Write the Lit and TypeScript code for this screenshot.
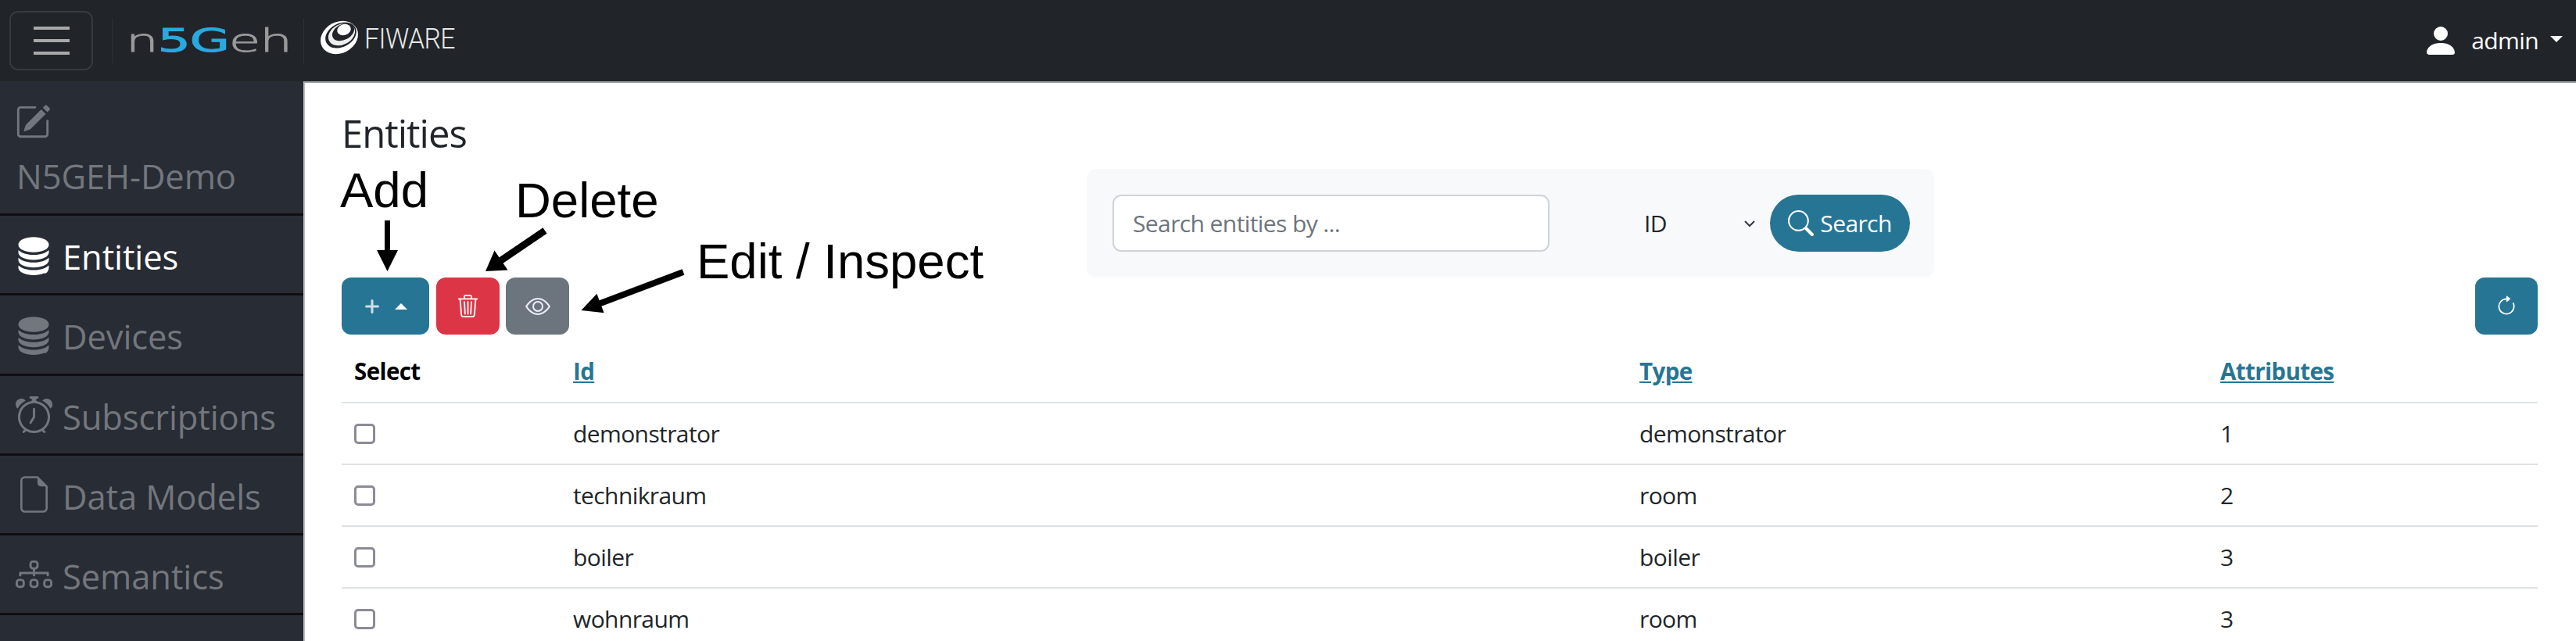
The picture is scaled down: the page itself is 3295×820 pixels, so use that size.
import { LitElement, html, css, svg } from "lit";
import { customElement } from "lit/decorators.js";

const ic = (size: number, body: unknown, cls = "") =>
  html`<svg class=${cls} width=${size} height=${size} viewBox="0 0 16 16" fill="currentColor">${body}</svg>`;

const pencil = svg`<path d="M15.502 1.94a.5.5 0 0 1 0 .706L14.459 3.69l-2-2L13.502.646a.5.5 0 0 1 .707 0l1.293 1.293zm-1.75 2.456-2-2L4.939 9.21a.5.5 0 0 0-.121.196l-.805 2.414a.25.25 0 0 0 .316.316l2.414-.805a.5.5 0 0 0 .196-.12l6.813-6.814z"/><path fill-rule="evenodd" d="M1 13.5A1.5 1.5 0 0 0 2.5 15h11a1.5 1.5 0 0 0 1.5-1.5v-6a.5.5 0 0 0-1 0v6a.5.5 0 0 1-.5.5h-11a.5.5 0 0 1-.5-.5v-11a.5.5 0 0 1 .5-.5H9a.5.5 0 0 0 0-1H2.5A1.5 1.5 0 0 0 1 2.5v11z"/>`;
const db = svg`<path d="M3.904 1.777C4.978 1.289 6.427 1 8 1s3.022.289 4.096.777C13.125 2.245 14 2.993 14 4s-.875 1.755-1.904 2.223C11.022 6.711 9.573 7 8 7s-3.022-.289-4.096-.777C2.875 5.755 2 5.007 2 4s.875-1.755 1.904-2.223Z"/><path d="M2 6.161V7c0 1.007.875 1.755 1.904 2.223C4.978 9.71 6.427 10 8 10s3.022-.289 4.096-.777C13.125 8.755 14 8.007 14 7v-.839c-.457.432-1.004.751-1.49.972C11.278 7.693 9.682 8 8 8s-3.278-.307-4.51-.867c-.486-.22-1.033-.54-1.49-.972Z"/><path d="M2 9.161V10c0 1.007.875 1.755 1.904 2.223C4.978 12.711 6.427 13 8 13s3.022-.289 4.096-.777C13.125 11.755 14 11.007 14 10v-.839c-.457.432-1.004.751-1.49.972-1.232.56-2.828.867-4.51.867s-3.278-.307-4.51-.867c-.486-.22-1.033-.54-1.49-.972Z"/><path d="M2 12.161V13c0 1.007.875 1.755 1.904 2.223C4.978 15.711 6.427 16 8 16s3.022-.289 4.096-.777C13.125 15.755 14 14.007 14 13v-.839c-.457.432-1.004.751-1.49.972-1.232.56-2.828.867-4.51.867s-3.278-.307-4.51-.867c-.486-.22-1.033-.54-1.49-.972Z"/>`;
const alarm = svg`<path d="M8.5 5.5a.5.5 0 0 0-1 0v3.362l-1.429 2.38a.5.5 0 1 0 .858.515l1.5-2.5A.5.5 0 0 0 8.5 9V5.5z"/><path d="M6.5 0a.5.5 0 0 0 0 1H7v1.07a7.001 7.001 0 0 0-3.273 12.474l-.602.602a.5.5 0 0 0 .707.708l.746-.746A6.97 6.97 0 0 0 8 16a6.97 6.97 0 0 0 3.422-.892l.746.746a.5.5 0 0 0 .707-.708l-.601-.602A7.001 7.001 0 0 0 9 2.07V1h.5a.5.5 0 0 0 0-1h-3zm1.038 3.018a6.093 6.093 0 0 1 .924 0 6 6 0 1 1-.924 0zM0 3.5c0 .753.333 1.429.86 1.887A8.035 8.035 0 0 1 4.387 1.86 2.5 2.5 0 0 0 0 3.5zM13.5 1c-.753 0-1.429.333-1.887.86a8.035 8.035 0 0 1 3.527 3.527A2.5 2.5 0 0 0 13.5 1z"/>`;
const file = svg`<path fill="none" stroke="currentColor" stroke-width=".9" d="M4 .5h5.500L13.500 4.500V14a1.500 1.500 0 0 1-1.500 1.500H4A1.500 1.500 0 0 1 2.500 14V2A1.500 1.500 0 0 1 4 .5z"/><path d="M9.500 .5v2.500a1.500 1.500 0 0 0 1.500 1.500h2.500z"/>`;
const diagram = svg`<path fill-rule="evenodd" d="M6 3.5A1.5 1.5 0 0 1 7.5 2h1A1.5 1.5 0 0 1 10 3.5v1A1.5 1.5 0 0 1 8.5 6v1H14a.5.5 0 0 1 .5.5v1a.5.5 0 0 1-1 0V8h-5v.5a.5.5 0 0 1-1 0V8h-5v.5a.5.5 0 0 1-1 0v-1A.5.5 0 0 1 2 7h5.5V6A1.5 1.5 0 0 1 6 4.5v-1zM8.5 5a.5.5 0 0 0 .5-.5v-1a.5.5 0 0 0-.5-.5h-1a.5.5 0 0 0-.5.5v1a.5.5 0 0 0 .5.5h1zM0 11.5A1.5 1.5 0 0 1 1.5 10h1A1.5 1.5 0 0 1 4 11.5v1A1.5 1.5 0 0 1 2.5 14h-1A1.5 1.5 0 0 1 0 12.5v-1zm1.5-.5a.5.5 0 0 0-.5.5v1a.5.5 0 0 0 .5.5h1a.5.5 0 0 0 .5-.5v-1a.5.5 0 0 0-.5-.5h-1zm4.5.5A1.5 1.5 0 0 1 7.5 10h1a1.5 1.5 0 0 1 1.5 1.5v1A1.5 1.5 0 0 1 8.5 14h-1A1.5 1.5 0 0 1 6 12.5v-1zm1.5-.5a.5.5 0 0 0-.5.5v1a.5.5 0 0 0 .5.5h1a.5.5 0 0 0 .5-.5v-1a.5.5 0 0 0-.5-.5h-1zM12 11.5a1.5 1.5 0 0 1 1.5-1.5h1a1.5 1.5 0 0 1 1.5 1.5v1a1.5 1.5 0 0 1-1.5 1.5h-1a1.5 1.5 0 0 1-1.5-1.5v-1zm1.5-.5a.5.5 0 0 0-.5.5v1a.5.5 0 0 0 .5.5h1a.5.5 0 0 0 .5-.5v-1a.5.5 0 0 0-.5-.5h-1z"/>`;
const trash = svg`<path d="M6.5 1h3a.5.5 0 0 1 .5.5v1H6v-1a.5.5 0 0 1 .5-.5ZM11 2.5v-1A1.5 1.5 0 0 0 9.5 0h-3A1.5 1.5 0 0 0 5 1.5v1H2.506a.58.58 0 0 0-.01 0H1.5a.5.5 0 0 0 0 1h.538l.853 10.66A2 2 0 0 0 4.885 16h6.23a2 2 0 0 0 1.994-1.84l.853-10.66h.538a.5.5 0 0 0 0-1h-.995a.59.59 0 0 0-.01 0H11Zm1.958 1-.846 10.58a1 1 0 0 1-.997.92h-6.23a1 1 0 0 1-.997-.92L3.042 3.5h9.916Zm-7.487 1a.5.5 0 0 1 .528.47l.5 8.5a.5.5 0 0 1-.998.06L5 5.03a.5.5 0 0 1 .47-.53Zm5.058 0a.5.5 0 0 1 .47.53l-.5 8.5a.5.5 0 1 1-.998-.06l.5-8.5a.5.5 0 0 1 .528-.47ZM8 4.5a.5.5 0 0 1 .5.5v8.5a.5.5 0 0 1-1 0V5a.5.5 0 0 1 .5-.5Z"/>`;
const eye = svg`<path d="M16 8s-3-5.5-8-5.5S0 8 0 8s3 5.5 8 5.5S16 8 16 8zM1.173 8a13.133 13.133 0 0 1 1.66-2.043C4.12 4.668 5.88 3.5 8 3.5c2.12 0 3.879 1.168 5.168 2.457A13.133 13.133 0 0 1 14.828 8c-.058.087-.122.183-.195.288-.335.48-.83 1.12-1.465 1.755C11.879 11.332 10.119 12.5 8 12.5c-2.12 0-3.879-1.168-5.168-2.457A13.134 13.134 0 0 1 1.172 8z"/><path d="M8 5.5a2.5 2.5 0 1 0 0 5 2.5 2.5 0 0 0 0-5zM4.500 8a3.500 3.500 0 1 1 7 0 3.500 3.500 0 0 1-7 0z"/>`;
const refresh = svg`<path fill-rule="evenodd" d="M8 3a5 5 0 1 0 4.546 2.914.5.5 0 0 1 .908-.417A6 6 0 1 1 8 2v1z"/><path d="M8 4.466V.534a.25.25 0 0 1 .41-.192l2.36 1.966c.12.1.12.284 0 .384L8.41 4.658A.25.25 0 0 1 8 4.466z"/>`;
const search = svg`<path d="M11.742 10.344a6.5 6.5 0 1 0-1.397 1.398h-.001c.03.04.062.078.098.115l3.85 3.85a1 1 0 0 0 1.415-1.414l-3.85-3.85a1.007 1.007 0 0 0-.115-.1zM12 6.5a5.5 5.5 0 1 1-11 0 5.5 5.5 0 0 1 11 0z"/>`;
const person = svg`<path d="M3 14s-1 0-1-1 1-4 6-4 6 3 6 4-1 1-1 1H3Zm5-6a3 3 0 1 0 0-6 3 3 0 0 0 0 6Z"/>`;
const plus = svg`<path d="M8 1.500a1.100 1.100 0 0 1 1.100 1.100v4.300h4.300a1.100 1.100 0 0 1 0 2.200H9.100v4.300a1.100 1.100 0 0 1-2.200 0V9.100H2.600a1.100 1.100 0 0 1 0-2.200h4.300V2.600A1.100 1.100 0 0 1 8 1.500z"/>`;

const NAV = [
  { label: "Entities", icon: db, size: 52, active: true },
  { label: "Devices", icon: db, size: 52 },
  { label: "Subscriptions", icon: alarm, size: 47 },
  { label: "Data Models", icon: file, size: 47 },
  { label: "Semantics", icon: diagram, size: 47 },
];
const ROWS = [
  ["demonstrator", "demonstrator", "1"],
  ["technikraum", "room", "2"],
  ["boiler", "boiler", "3"],
  ["wohnraum", "room", "3"],
];

@customElement("app-root")
export class AppRoot extends LitElement {
  static styles = css`
    :host { display: block; position: relative; height: 820px; width: 3295px; overflow: hidden; background: #fff;
      font-family: "Open Sans", "Noto Sans", sans-serif; font-size: 30px; color: #212529; letter-spacing: -0.6px; }
    .top { height: 104px; background: #212529; display: flex; align-items: center; box-sizing: border-box; }
    .burger { width: 107px; height: 76px; margin-left: 12px; box-sizing: border-box; border: 2px solid #363a3f; border-radius: 11px;
      display: flex; flex-direction: column; justify-content: center; align-items: center; gap: 12px; flex: none; }
    .burger i { display: block; width: 46px; height: 4px; background: #a9a9a9; }
    .vr { width: 1px; height: 58px; background: #2d3136; flex: none; }
    .vr.a { margin-left: 24px; }
    .n5 { margin-left: 20px; flex: none; display: block; overflow: visible; }
    .vr.b { margin-left: 18px; }
    .fw { margin-left: 20px; flex: none; display: block; overflow: visible; margin-top: -9px; }
    .user { margin-left: auto; display: flex; align-items: center; color: #fff; flex: none; padding-right: 17px; }
    .user svg { display: block; }
    .user span { margin-left: 15px; font-size: 30px; position: relative; top: -1px; }
    .caret { width: 0; height: 0; border-left: 8px solid transparent; border-right: 8px solid transparent; border-top: 8px solid #fff; margin-left: 15px; margin-top: -4px; }
    .body { display: flex; height: 716px; }
    .side { width: 388px; flex: none; background: #282c34; color: #72777e; font-size: 43.5px; letter-spacing: -0.1px; }
    .brand { height: 169px; border-bottom: 3px solid #0d0f12; box-sizing: content-box; padding-left: 19px; display: flex; flex-direction: column; }
    .brand svg { display: block; margin-top: 29px; }
    .brand span { margin-top: 18px; line-height: 58px; padding-left: 2px; }
    .item { height: 99.25px; border-bottom: 3px solid #0d0f12; display: flex; align-items: center; padding-left: 20px; gap: 14px; }
    .item span { position: relative; top: 3px; }
    .item.on { color: #fff; }
    .slot { width: 46px; flex: none; display: flex; justify-content: center; }
    .slot svg { flex: none; display: block; }
    .main { flex: 1; min-width: 0; padding: 0 49px 0 47px; border-left: 2px solid #b9bcc0; border-top: 2px solid #9a9da1; box-sizing: border-box; }
    h1 { margin: 0; font-weight: 400; font-size: 49px; line-height: 68px; padding-top: 30px; height: 80px; letter-spacing: -1px; color: #212529; }
    .panel { margin-left: 953px; width: 1084px; height: 139px; background: #f8f9fa; border-radius: 12px; display: flex; align-items: center; padding-left: 33px; box-sizing: border-box; }
    input { width: 559px; height: 73px; box-sizing: border-box; border: 2px solid #ced4da; border-radius: 11px; padding: 0 24px; font: inherit; letter-spacing: inherit; background: #fff; outline: none; flex: none; }
    input::placeholder { color: #6c757d; opacity: 1; }
    .sel { width: 282px; flex: none; display: flex; align-items: center; padding-left: 121px; box-sizing: border-box; }
    .sel span { flex: 1; }
    .sel svg { display: block; margin-right: 18px; }
    .go { height: 73px; width: 179px; flex: none; border-radius: 37px; background: #277594; color: #fff; display: flex; align-items: center; justify-content: center; gap: 8px; }
    .go svg { display: block; flex: none; }
    .bar { display: flex; height: 73px; gap: 9px; }
    .btn { height: 73px; border-radius: 12px; display: flex; align-items: center; justify-content: center; color: #fff; flex: none; box-sizing: border-box; }
    .btn svg { display: block; }
    .add { width: 112px; background: #277594; gap: 18px; color: #cfdfe6; }
    .add b { width: 0; height: 0; border-left: 8px solid transparent; border-right: 8px solid transparent; border-bottom: 8px solid #fff; }
    .del { width: 81px; background: #dc3545; }
    .view { width: 81px; background: #6c757d; margin-left: -1px; color: #eef; }
    .re { width: 80px; background: #277594; margin-left: auto; }
    table { width: 2809px; border-collapse: collapse; table-layout: fixed; margin-top: 8px; }
    th, td { height: 79px; padding: 0 16px; text-align: left; box-sizing: border-box; border-bottom: 2px solid #dee2e6; font-weight: 400; line-height: 1; }
    th { font-weight: 700; font-size: 29.5px; color: #000; }
    th a { color: #277594; text-decoration: underline; }
    .box { display: block; width: 27px; height: 26px; border: 3px solid #8b8b98; border-radius: 5px; box-sizing: border-box; }
    .over { position: absolute; left: 0; top: 0; pointer-events: none; }
    .over text { font-family: "Liberation Sans", Arial, sans-serif; font-size: 63.5px; letter-spacing: 0; fill: #000; }
  `;

  render() {
    return html`
      <div class="top">
        <div class="burger"><i></i><i></i><i></i></div>
        <div class="vr a"></div>
        <svg class="n5" width="206" height="60" viewBox="0 0 206 60">
          <text x="-3" y="44" font-family="DejaVu Sans" font-weight="200" font-size="40" textLength="212" lengthAdjust="spacingAndGlyphs" fill="#9a9a9a" stroke="#9a9a9a" stroke-width=".8">n<tspan fill="#29a9df" stroke="#29a9df" font-weight="400" stroke-width="1">5G</tspan>eh</text>
        </svg>
        <div class="vr b"></div>
        <svg class="fw" width="176" height="44" viewBox="0 0 176 44">
          <ellipse cx="25" cy="22" rx="25" ry="20" transform="rotate(-28 25 22)" fill="#fff"/>
          <ellipse cx="27" cy="19" rx="21" ry="15" transform="rotate(-28 27 19)" fill="#212529"/>
          <ellipse cx="28" cy="18" rx="18" ry="13" transform="rotate(-28 28 18)" fill="#eee"/>
          <ellipse cx="30" cy="15" rx="15" ry="10" transform="rotate(-28 30 15)" fill="#212529"/>
          <ellipse cx="31" cy="12" rx="9" ry="7" transform="rotate(-20 31 12)" fill="#fff"/>
          <text x="57" y="36" font-family="Roboto" font-weight="300" font-size="37" textLength="116" lengthAdjust="spacingAndGlyphs" fill="#e8e8e8">FIWARE</text>
        </svg>
        <div class="user">${ic(48, person)}<span>admin</span><div class="caret"></div></div>
      </div>
      <div class="body">
        <nav class="side">
          <div class="brand">${ic(46, pencil)}<span>N5GEH-Demo</span></div>
          ${NAV.map(
            (n) => html`<div class="item ${n.active ? "on" : ""}"><div class="slot">${ic(n.size, n.icon)}</div><span>${n.label}</span></div>`
          )}
        </nav>
        <main class="main">
          <h1>Entities</h1>
          <div class="panel">
            <input placeholder="Search entities by ..." />
            <div class="sel"><span>ID</span><svg width="16" height="16" viewBox="0 0 16 16"><path d="M2 5l6 6 6-6" fill="none" stroke="#343a40" stroke-width="2"/></svg></div>
            <div class="go">${ic(33, search)}<span>Search</span></div>
          </div>
          <div class="bar">
            <div class="btn add">${ic(22, plus)}<b></b></div>
            <div class="btn del">${ic(29, trash)}</div>
            <div class="btn view">${ic(32, eye)}</div>
            <div class="btn re">${ic(28, refresh)}</div>
          </div>
          <table>
            <colgroup><col style="width:280px" /><col style="width:1364px" /><col style="width:743px" /><col style="width:422px" /></colgroup>
            <thead><tr><th>Select</th><th><a>Id</a></th><th><a>Type</a></th><th><a>Attributes</a></th></tr></thead>
            <tbody>
              ${ROWS.map(
                (r) => html`<tr><td><span class="box"></span></td><td>${r[0]}</td><td>${r[1]}</td><td>${r[2]}</td></tr>`
              )}
            </tbody>
          </table>
        </main>
      </div>
      <svg class="over" width="3295" height="820" viewBox="0 0 3295 820">
        <text x="435" y="265">Add</text>
        <text x="659" y="278">Delete</text>
        <text x="891" y="356">Edit / Inspect</text>
        <polygon points="492,282 499,282 499,320 509,320 495.500,347 482,320 492,320" fill="#000"/>
        <polygon points="699.500,298.700 694.500,291.300 638.500,329.300 632.500,320.600 621,347 649.500,345.400 643.500,336.700" fill="#000"/>
        <polygon points="875.400,351.700 872.600,344.300 766.600,384.300 763.400,375.800 743.500,397 772.600,400.200 769.400,391.700" fill="#000"/>
      </svg>
    `;
  }
}
